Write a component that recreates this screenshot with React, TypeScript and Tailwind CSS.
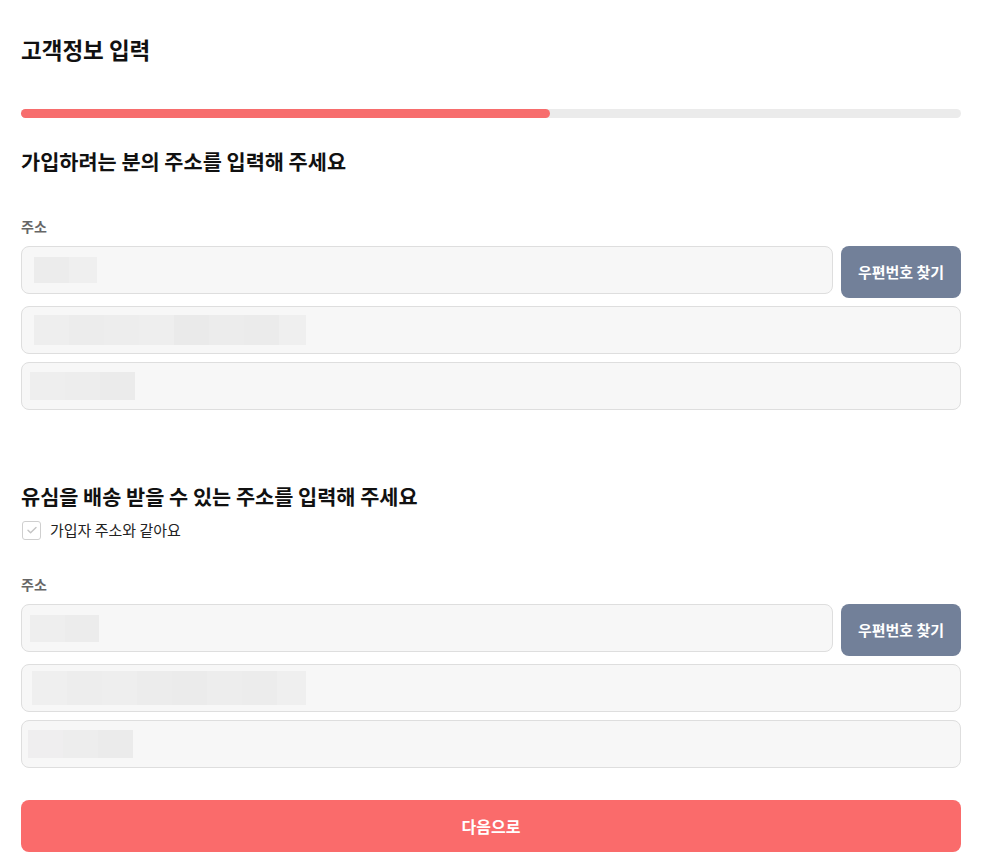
import React from "react";

const font = { fontFamily: '"Noto Sans CJK KR", "Noto Sans", sans-serif' };

type Blk = { w: number; c: string };

function Blur({ blocks, h, pl }: { blocks: Blk[]; h: number; pl: number }) {
  return (
    <div className="flex" style={{ paddingLeft: pl }}>
      {blocks.map((b, i) => (
        <div key={i} style={{ width: b.w, height: h, background: b.c }} />
      ))}
    </div>
  );
}

function Input({ children }: { children?: React.ReactNode }) {
  return (
    <div className="flex h-[48px] w-full items-center rounded-[8px] border border-[#dedede] bg-[#f7f7f7]">
      {children}
    </div>
  );
}

function AddressBlock({ a, b, c }: { a: React.ReactNode; b: React.ReactNode; c: React.ReactNode }) {
  return (
    <div className="flex flex-col gap-[8px]">
      <div className="flex items-start gap-[8px]">
        <div className="flex-1">
          <Input>{a}</Input>
        </div>
        <button className="h-[52px] w-[120px] shrink-0 rounded-[8px] bg-[#728099] text-[15px] font-bold text-white">
          우편번호 찾기
        </button>
      </div>
      <Input>{b}</Input>
      <Input>{c}</Input>
    </div>
  );
}

export default function App() {
  return (
    <div className="min-h-[865px] bg-white px-[21px] pt-[35px] text-[#111]" style={font}>
      <h1 className="text-[22.5px] font-bold leading-[28px]">고객정보 입력</h1>

      <div className="mt-[46px] h-[9px] w-full rounded-full bg-[#ebebeb]">
        <div className="h-full rounded-full bg-[#f76d6d]" style={{ width: "56.3%" }} />
      </div>

      <h2 className="mt-[29px] text-[20.8px] font-bold leading-[28px]">가입하려는 분의 주소를 입력해 주세요</h2>

      <div className="mt-[41px] text-[14px] font-bold leading-[20px] text-[#666]">주소</div>
      <div className="mt-[10px]">
        <AddressBlock
          a={<Blur pl={12} h={26} blocks={[{ w: 35, c: "#ececec" }, { w: 28, c: "#efefef" }]} />}
          b={
            <Blur
              pl={12}
              h={30}
              blocks={[
                { w: 35, c: "#eeeeee" },
                { w: 35, c: "#ececec" },
                { w: 35, c: "#ededed" },
                { w: 35, c: "#eeeeee" },
                { w: 35, c: "#eaeaea" },
                { w: 35, c: "#ececec" },
                { w: 35, c: "#ebebeb" },
                { w: 27, c: "#efefef" },
              ]}
            />
          }
          c={
            <Blur
              pl={8}
              h={28}
              blocks={[
                { w: 35, c: "#eeeeee" },
                { w: 35, c: "#ededed" },
                { w: 35, c: "#ebebeb" },
              ]}
            />
          }
        />
      </div>

      <h2 className="mt-[72px] text-[20.8px] font-bold leading-[28px]">유심을 배송 받을 수 있는 주소를 입력해 주세요</h2>

      <label className="mt-[9px] flex items-center gap-[9px]">
        <span className="ml-[1px] flex h-[19px] w-[19px] items-center justify-center rounded-[3px] border border-[#cfcfcf] bg-white">
          <svg width="12" height="12" viewBox="0 0 12 12" fill="none">
            <path d="M2 6.3l2.6 2.5L10 3.5" stroke="#c4c4c4" strokeWidth="1.4" strokeLinecap="round" strokeLinejoin="round" />
          </svg>
        </span>
        <span className="text-[15px] leading-[22px] text-[#222]">가입자 주소와 같아요</span>
      </label>

      <div className="mt-[33px] text-[14px] font-bold leading-[20px] text-[#666]">주소</div>
      <div className="mt-[10px]">
        <AddressBlock
          a={
            <Blur
              pl={8}
              h={27}
              blocks={[
                { w: 35, c: "#eeeeee" },
                { w: 34, c: "#ececec" },
              ]}
            />
          }
          b={
            <Blur
              pl={10}
              h={34}
              blocks={[
                { w: 35, c: "#efefef" },
                { w: 35, c: "#ededed" },
                { w: 35, c: "#eeeeee" },
                { w: 35, c: "#ececec" },
                { w: 35, c: "#ebebeb" },
                { w: 35, c: "#ededed" },
                { w: 35, c: "#ececec" },
                { w: 29, c: "#efefef" },
              ]}
            />
          }
          c={
            <Blur
              pl={6}
              h={28}
              blocks={[
                { w: 35, c: "#efeeef" },
                { w: 35, c: "#ededed" },
                { w: 35, c: "#ebebeb" },
              ]}
            />
          }
        />
      </div>

      <button className="mt-[32px] h-[52px] w-full rounded-[8px] bg-[#fa6b6b] text-[16px] font-bold text-white">
        다음으로
      </button>
    </div>
  );
}
